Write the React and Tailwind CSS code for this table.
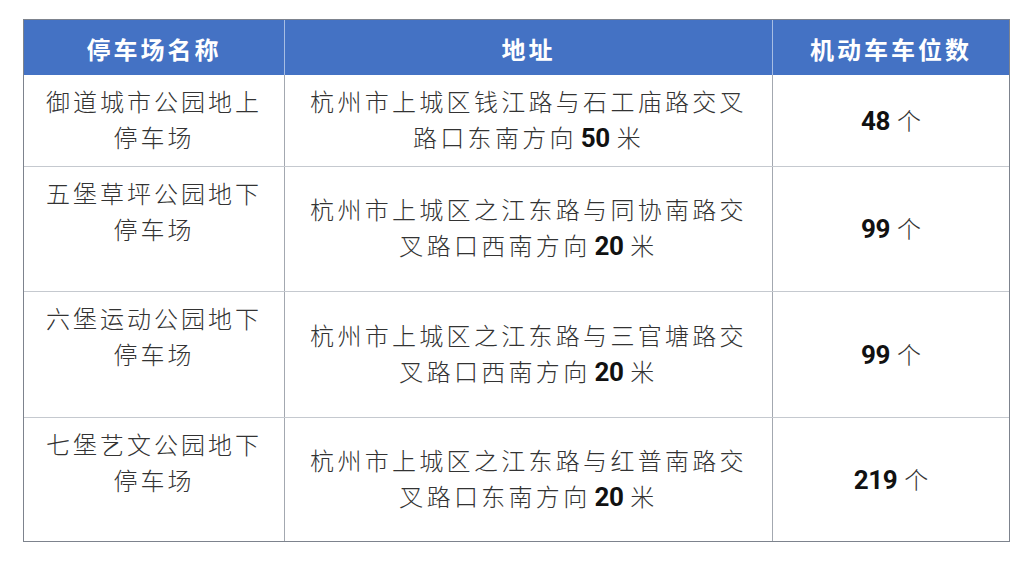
import React from "react";

const cjk = { fontFamily: '"Noto Sans CJK SC", "Noto Sans", sans-serif' };

const rows = [
  {
    name: ["御道城市公园地上", "停车场"],
    addr: ["杭州市上城区钱江路与石工庙路交叉", "路口东南方向", "50"],
    count: "48",
    h: "h-[91px]",
  },
  {
    name: ["五堡草坪公园地下", "停车场"],
    addr: ["杭州市上城区之江东路与同协南路交", "叉路口西南方向", "20"],
    count: "99",
    h: "h-[125px]",
  },
  {
    name: ["六堡运动公园地下", "停车场"],
    addr: ["杭州市上城区之江东路与三官塘路交", "叉路口西南方向", "20"],
    count: "99",
    h: "h-[126px]",
  },
  {
    name: ["七堡艺文公园地下", "停车场"],
    addr: ["杭州市上城区之江东路与红普南路交", "叉路口东南方向", "20"],
    count: "219",
    h: "h-[124px]",
  },
];

const Num = ({ children }) => (
  <span className="font-['Roboto'] font-bold text-[26px] tracking-[-0.5px] text-[#111] mr-[7px]">
    {children}
  </span>
);

const App = () => {
  return (
    <div className="w-[1030px] h-[563px] bg-white overflow-hidden" style={cjk}>
      <div className="ml-[23px] mt-[19px] w-[987px] border border-[#7d838d]">
        {/* header */}
        <div className="grid grid-cols-[261px_488px_236px] h-[55px] bg-[#4472c4] text-white font-bold text-[24px] tracking-[3px]">
          <div className="flex items-center justify-center pt-[3px] border-r border-[#a7bde3]">停车场名称</div>
          <div className="flex items-center justify-center pt-[3px] border-r border-[#a7bde3]">地址</div>
          <div className="flex items-center justify-center pt-[3px]">机动车车位数</div>
        </div>

        {rows.map((r, i) => (
          <div
            key={i}
            className={`grid grid-cols-[261px_488px_236px] ${r.h} ${i > 0 ? "border-t border-[#c5c9cf]" : ""} text-[24px] leading-[36px] font-light text-[#333]`}
          >
            <div className="flex flex-col items-center pt-[8px] tracking-[3px] border-r border-[#a3a8b0]">
              <span>{r.name[0]}</span>
              <span>{r.name[1]}</span>
            </div>
            <div className="flex flex-col items-center justify-center pb-[3px] tracking-[3.3px] border-r border-[#a3a8b0]">
              <span>{r.addr[0]}</span>
              <span className="flex items-baseline">
                {r.addr[1]}
                <span className="ml-[4px]">
                  <Num>{r.addr[2]}</Num>
                </span>
                米
              </span>
            </div>
            <div className="flex items-center justify-center pb-[1px]">
              <span className="flex items-baseline">
                <Num>{r.count}</Num>
                <span>个</span>
              </span>
            </div>
          </div>
        ))}
      </div>
    </div>
  );
};

export default App;
